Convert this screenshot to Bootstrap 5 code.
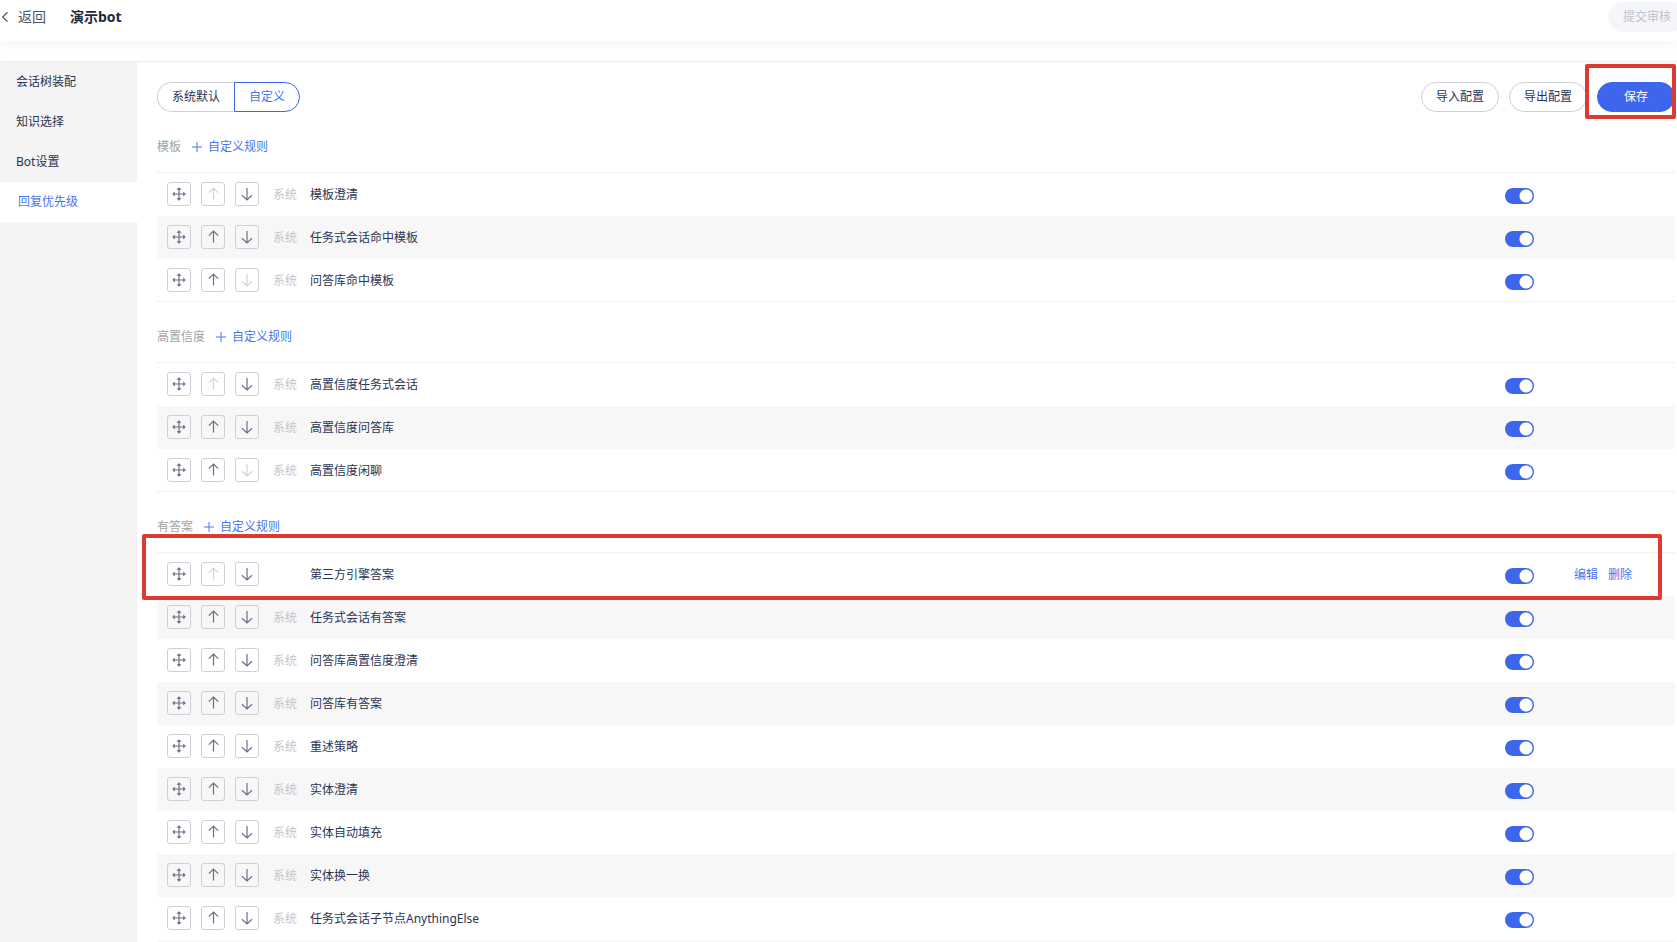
<!DOCTYPE html>
<html lang="zh-CN">
<head>
<meta charset="utf-8">
<meta name="viewport" content="width=device-width, initial-scale=1">
<title>演示bot - 回复优先级</title>
<link href="https://cdn.jsdelivr.net/npm/bootstrap@5.3.0/dist/css/bootstrap.min.css" rel="stylesheet">
<style>
  :root { --blue: #3e66ed; --link: #4a74ee; --ink: #2b3553; --line: #f0f0f0; --edge: #cfcfd8; --alert: #db3b30; }
  body { font: 12px/20px "Noto Sans", "Noto Sans CJK SC", sans-serif; color: var(--ink); background: #fff; }
  a { color: var(--link); text-decoration: none; }
  .topbar { height: 41px; padding: 2px 0 9px 2px; box-shadow: 0 2px 12px rgba(0,0,0,.05); }
  .back-link { color: #4b546e; font-size: 14px; gap: 10px; }
  .bot-title { font-size: 14px; line-height: 20px; font-weight: 700; color: #1f2a40; margin-left: 24px; }
  .pill { height: 30px; padding: 0 14px; border: 1px solid var(--edge); border-radius: 15px; background: #fff; color: var(--ink); line-height: 28px; white-space: nowrap; }
  .pill-primary { width: 78px; background: var(--blue); border-color: var(--blue); color: #fff; }
  .pill-muted { background: #f5f6f8; border-color: #f5f6f8; color: #bfc2cc; margin-right: -9px; }
  .workspace { margin-top: 20px; border-top: 1px solid #ededed; min-height: 0; }
  .side-menu { width: 137px; background: #f4f4f4; border-right: 1px solid #f0f0f0; border-radius: 4px 0 0 0; }
  .side-menu a { display: block; height: 40px; padding-left: 16px; line-height: 40px; color: var(--ink); }
  .side-menu a.active { background: #fff; color: var(--link); padding-left: 18px; margin-right: -1px; }
  .content-pane { padding: 20px 2px 0 20px; min-width: 0; }
  .seg-left { border-radius: 15px 0 0 15px; border-right: 0; }
  .seg-right { border-radius: 0 15px 15px 0; border-color: var(--blue); color: var(--link); }
  .group-head { height: 60px; padding-top: 25px; gap: 11px; color: #a3a3a3; }
  .group-head a { display: flex; align-items: center; gap: 6px; }
  .rules { width: 100%; table-layout: fixed; border-collapse: separate; border-spacing: 0; border-top: 1px solid var(--line); }
  .rules td { height: 43px; padding: 0; vertical-align: middle; white-space: nowrap; }
  .rules tr:nth-child(even) td { background: #f7f7f7; }
  .rules tr:last-child td { box-shadow: inset 0 -1px var(--line); }
  .c-move { width: 116px; } .c-kind { width: 37px; } .c-switch { width: 69px; } .c-act { width: 101px; }
  .kind { color: #c3c5ce; }
  .tools { gap: 10px; padding-left: 10px; margin-bottom: 1px; }
  .tool { width: 24px; height: 24px; padding: 0; border: 1px solid var(--edge); border-radius: 3px; background: transparent; color: #68708a; display: flex; align-items: center; justify-content: center; }
  .tool:disabled { color: #d3d4da; }
  .toggle { appearance: none; display: block; width: 29px; height: 16px; margin: 3px 0 0; border-radius: 8px; background: radial-gradient(circle at 21px 8px, #fff 6px, var(--blue) 7px); }
  .toggle:not(:checked) { background: radial-gradient(circle at 8px 8px, #fff 6px, #c3c5ce 7px); }
  .outlined { position: relative; }
  .callout-box { position: absolute; border: 4px solid var(--alert); border-radius: 2px; pointer-events: none; }
  .callout-save { top: -18px; right: -1px; bottom: -7px; left: -12px; }
  .callout-row { top: -19px; right: 13px; bottom: -4px; left: -15px; }
  svg { display: block; fill: none; stroke: currentColor; }
</style>
</head>
<body class="vh-100 overflow-hidden d-flex flex-column">
<svg width="0" height="0" class="position-absolute" aria-hidden="true">
  <symbol id="i-move" viewBox="0 0 14 14"><path stroke-width="1.2" d="M7 1v12M1 7h12"/><path fill="currentColor" stroke-width=".6" d="M5.1 2.5 7 .6l1.9 1.9ZM5.1 11.5 7 13.4l1.9-1.9ZM2.5 5.1.6 7l1.9 1.9ZM11.5 5.1 13.4 7l-1.9 1.9Z"/></symbol>
  <symbol id="i-up" viewBox="0 0 14 14"><path stroke-width="1.2" d="M7.5 12.5V1M2.8 5.7 7.5 1l4.7 4.7"/></symbol>
  <symbol id="i-down" viewBox="0 0 14 14"><path stroke-width="1.2" d="M7 1v12M2 8.2 7 13l5-4.8"/></symbol>
  <symbol id="i-plus" viewBox="0 0 10 10"><path d="M5 0v10M0 5h10"/></symbol>
</svg>

<header class="topbar d-flex align-items-center flex-shrink-0">
  <a href="#" class="back-link d-flex align-items-center"><svg width="6" height="10" viewBox="0 0 6 10"><path stroke-width="1.2" d="M5.5.3.7 5l4.8 4.7"/></svg>返回</a>
  <h1 class="bot-title mb-0">演示bot</h1>
  <button type="button" class="pill pill-muted ms-auto" disabled>提交审核</button>
</header>

<div class="workspace d-flex flex-grow-1">
  <nav class="side-menu flex-shrink-0" aria-label="设置">
    <a href="#">会话树装配</a>
    <a href="#">知识选择</a>
    <a href="#">Bot设置</a>
    <a href="#" class="active" aria-current="page">回复优先级</a>
  </nav>
  <main class="content-pane flex-grow-1">
    <div class="d-flex justify-content-between">
      <div class="d-flex">
        <button type="button" class="pill seg-left">系统默认</button>
        <button type="button" class="pill seg-right">自定义</button>
      </div>
      <div class="d-flex" style="gap:10px">
        <button type="button" class="pill">导入配置</button>
        <button type="button" class="pill">导出配置</button>
        <div class="outlined"><button type="button" class="pill pill-primary">保存</button><span class="callout-box callout-save"></span></div>
      </div>
    </div>
    <div id="groups"></div>
  </main>
</div>

<script>
  const groups = [
    ['模板', ['模板澄清', '任务式会话命中模板', '问答库命中模板']],
    ['高置信度', ['高置信度任务式会话', '高置信度问答库', '高置信度闲聊']],
    ['有答案', ['第三方引擎答案', '任务式会话有答案', '问答库高置信度澄清', '问答库有答案', '重述策略',
      '实体澄清', '实体自动填充', '实体换一换', '任务式会话子节点AnythingElse', '']]
  ];
  const custom = '第三方引擎答案';
  const icon = (id, n = 14) => `<svg width="${n}" height="${n}"><use href="#i-${id}"/></svg>`;
  const tool = (id, label, off) => `<button type="button" class="tool" aria-label="${label}"${off ? ' disabled' : ''}>${icon(id)}</button>`;
  const row = (name, i, all) => !name ? '<tr><td colspan="5"></td></tr>' : `
    <tr class="${name === custom ? 'outlined' : ''}">
      <td><div class="tools d-flex">${tool('move', '拖动')}${tool('up', '上移', i === 0)}${tool('down', '下移', i === all.length - 1)}</div></td>
      <td class="kind">${name === custom ? '' : '系统'}</td>
      <td>${name}</td>
      <td><input type="checkbox" role="switch" class="toggle" aria-label="${name}" checked></td>
      <td>${name === custom ? '<div class="d-flex" style="gap:10px"><a href="#">编辑</a><a href="#">删除</a></div><span class="callout-box callout-row"></span>' : ''}</td>
    </tr>`;
  document.getElementById('groups').innerHTML = groups.map(([title, rules]) => `
    <section>
      <div class="group-head d-flex align-items-start"><span>${title}</span><a href="#">${icon('plus', 10)}自定义规则</a></div>
      <table class="rules">
        <colgroup><col class="c-move"><col class="c-kind"><col><col class="c-switch"><col class="c-act"></colgroup>
        <tbody>${rules.map(row).join('')}</tbody>
      </table>
    </section>`).join('');
</script>
<script src="https://cdn.jsdelivr.net/npm/bootstrap@5.3.0/dist/js/bootstrap.bundle.min.js"></script>
</body>
</html>
